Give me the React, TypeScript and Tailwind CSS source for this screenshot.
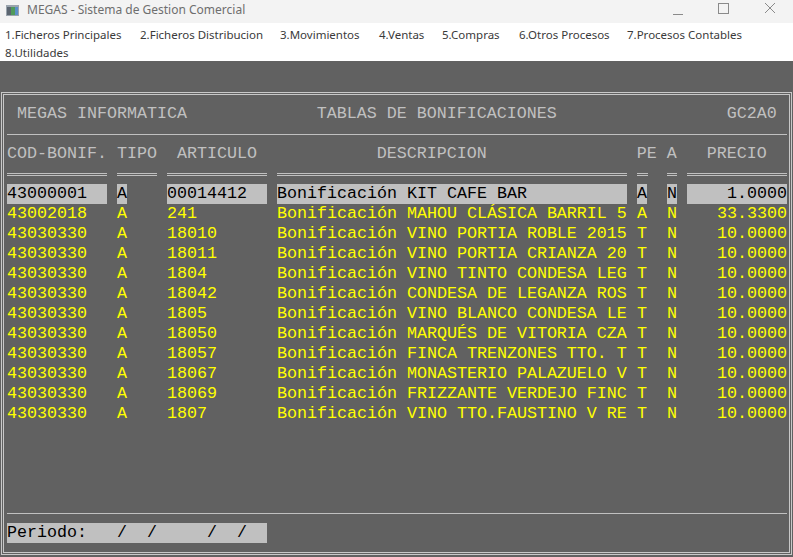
import React from "react";

type Row = {
  cod: string;
  tipo: string;
  art: string;
  desc: string;
  pe: string;
  a: string;
  precio: string;
};

const rows: Row[] = [
  { cod: "43000001", tipo: "A", art: "00014412", desc: "Bonificación KIT CAFE BAR", pe: "A", a: "N", precio: "1.0000" },
  { cod: "43002018", tipo: "A", art: "241", desc: "Bonificación MAHOU CLÁSICA BARRIL 5", pe: "A", a: "N", precio: "33.3300" },
  { cod: "43030330", tipo: "A", art: "18010", desc: "Bonificación VINO PORTIA ROBLE 2015", pe: "T", a: "N", precio: "10.0000" },
  { cod: "43030330", tipo: "A", art: "18011", desc: "Bonificación VINO PORTIA CRIANZA 20", pe: "T", a: "N", precio: "10.0000" },
  { cod: "43030330", tipo: "A", art: "1804", desc: "Bonificación VINO TINTO CONDESA LEG", pe: "T", a: "N", precio: "10.0000" },
  { cod: "43030330", tipo: "A", art: "18042", desc: "Bonificación CONDESA DE LEGANZA ROS", pe: "T", a: "N", precio: "10.0000" },
  { cod: "43030330", tipo: "A", art: "1805", desc: "Bonificación VINO BLANCO CONDESA LE", pe: "T", a: "N", precio: "10.0000" },
  { cod: "43030330", tipo: "A", art: "18050", desc: "Bonificación MARQUÉS DE VITORIA CZA", pe: "T", a: "N", precio: "10.0000" },
  { cod: "43030330", tipo: "A", art: "18057", desc: "Bonificación FINCA TRENZONES TTO. T", pe: "T", a: "N", precio: "10.0000" },
  { cod: "43030330", tipo: "A", art: "18067", desc: "Bonificación MONASTERIO PALAZUELO V", pe: "T", a: "N", precio: "10.0000" },
  { cod: "43030330", tipo: "A", art: "18069", desc: "Bonificación FRIZZANTE VERDEJO FINC", pe: "T", a: "N", precio: "10.0000" },
  { cod: "43030330", tipo: "A", art: "1807", desc: "Bonificación VINO TTO.FAUSTINO V RE", pe: "T", a: "N", precio: "10.0000" },
];

// ancho de cada entrada del menu, para que caigan donde en la captura
const menu = [
  { label: "1.Ficheros Principales", w: "w-[135px]" },
  { label: "2.Ficheros Distribucion", w: "w-[140px]" },
  { label: "3.Movimientos", w: "w-[99px]" },
  { label: "4.Ventas", w: "w-[63px]" },
  { label: "5.Compras", w: "w-[77px]" },
  { label: "6.Otros Procesos", w: "w-[108px]" },
  { label: "7.Procesos Contables", w: "w-[150px]" },
];

function DataRow({ row, selected }: { row: Row; selected: boolean }) {
  const cell = selected ? "bg-[#c0c0c0] text-black" : "text-[#ffff00]";
  return (
    <div className="flex h-[20px] leading-[20px] whitespace-pre">
      <span className={`w-[100px] ${cell}`}>{row.cod}</span>
      <span className={`ml-[10px] w-[10px] ${cell}`}>{row.tipo}</span>
      <span className={`ml-[40px] w-[100px] ${cell}`}>{row.art}</span>
      <span className={`ml-[10px] w-[350px] ${cell}`}>{row.desc}</span>
      <span className={`ml-[10px] w-[10px] ${cell}`}>{row.pe}</span>
      <span className={`ml-[20px] w-[10px] ${cell}`}>{row.a}</span>
      <span className={`ml-[10px] w-[100px] text-right ${cell}`}>{row.precio}</span>
    </div>
  );
}

export default function App() {
  return (
    <div className="w-[793px] h-[557px] overflow-hidden flex flex-col bg-[#616161]">
      {/* barra de titulo */}
      <div className="h-[23px] bg-[#f3f3f3] flex items-center font-['Noto_Sans',sans-serif] text-[12px] text-[#6e6e6e]">
        <svg className="ml-[6px] -mt-[3px] w-[13px] h-[11px]" viewBox="0 0 13 11">
          <rect x="0" y="0" width="13" height="11" fill="#9aa4ad" />
          <rect x="1" y="2" width="4" height="8" fill="#5b6570" />
          <rect x="5" y="2" width="4" height="8" fill="#4f9a5a" />
          <rect x="9" y="2" width="3" height="8" fill="#5a8fc8" />
        </svg>
        <span className="ml-[8px] -mt-[4px]">MEGAS - Sistema de Gestion Comercial</span>
        <div className="ml-auto flex items-center h-full">
          <svg className="w-[46px] h-[23px] text-[#8a8a8a]" viewBox="0 0 46 23">
            <line x1="18" y1="14.5" x2="28" y2="14.5" stroke="currentColor" strokeWidth="1" />
          </svg>
          <svg className="w-[46px] h-[23px] text-[#8a8a8a]" viewBox="0 0 46 23">
            <rect x="17.5" y="3.5" width="10" height="10" fill="none" stroke="currentColor" strokeWidth="1" />
          </svg>
          <svg className="w-[46px] h-[23px] text-[#8a8a8a]" viewBox="0 0 46 23">
            <path d="M18 3 L28 13 M28 3 L18 13" stroke="currentColor" strokeWidth="1" />
          </svg>
        </div>
      </div>

      {/* menu */}
      <div className="h-[38px] bg-white font-['Noto_Sans',sans-serif] text-[11.5px] text-[#3a3a3a] leading-[18px] px-[5px] pt-[3px] whitespace-nowrap">
        <div className="flex">
          {menu.map((m) => (
            <span key={m.label} className={`shrink-0 ${m.w}`}>
              {m.label}
            </span>
          ))}
        </div>
        <div>8.Utilidades</div>
      </div>

      {/* terminal */}
      <div className="flex-1 pt-[31px] pb-[2px] pl-[1px] pr-[1px] font-['Courier_New','Liberation_Mono',monospace] text-[16.667px]">
        <div className="h-full border-[3px] border-double border-[#c8c8c8] pl-[3px] pr-[2px] pt-[9px] text-[#c0c0c0]">
          <div className="h-[20px] leading-[20px] whitespace-pre">
            {" MEGAS INFORMATICA             TABLAS DE BONIFICACIONES                 GC2A0"}
          </div>
          <div className="mt-[10px] h-[1px] w-[780px] bg-[#c0c0c0]" />
          <div className="mt-[9px] h-[20px] leading-[20px] whitespace-pre">
            {"COD-BONIF. TIPO  ARTICULO            DESCRIPCION               PE A   PRECIO"}
          </div>
          <div className="mt-[9px] flex">
            <div className="w-[100px] h-[3px] border-y border-[#c0c0c0]" />
            <div className="ml-[10px] w-[40px] h-[3px] border-y border-[#c0c0c0]" />
            <div className="ml-[10px] w-[100px] h-[3px] border-y border-[#c0c0c0]" />
            <div className="ml-[10px] w-[350px] h-[3px] border-y border-[#c0c0c0]" />
            <div className="ml-[10px] w-[11px] h-[3px] border-y border-[#c0c0c0]" />
            <div className="ml-[19px] w-[10px] h-[3px] border-y border-[#c0c0c0]" />
            <div className="ml-[10px] w-[100px] h-[3px] border-y border-[#c0c0c0]" />
          </div>
          <div className="mt-[8px]">
            {rows.map((r, i) => (
              <DataRow key={i} row={r} selected={i === 0} />
            ))}
          </div>
          <div className="mt-[89px] h-[1px] w-[780px] bg-[#c0c0c0]" />
          <div className="mt-[9px] h-[20px] leading-[20px] whitespace-pre">
            <span className="inline-block w-[260px] bg-[#c0c0c0] text-black">{"Periodo:   /  /     /  /"}</span>
          </div>
        </div>
      </div>
    </div>
  );
}
